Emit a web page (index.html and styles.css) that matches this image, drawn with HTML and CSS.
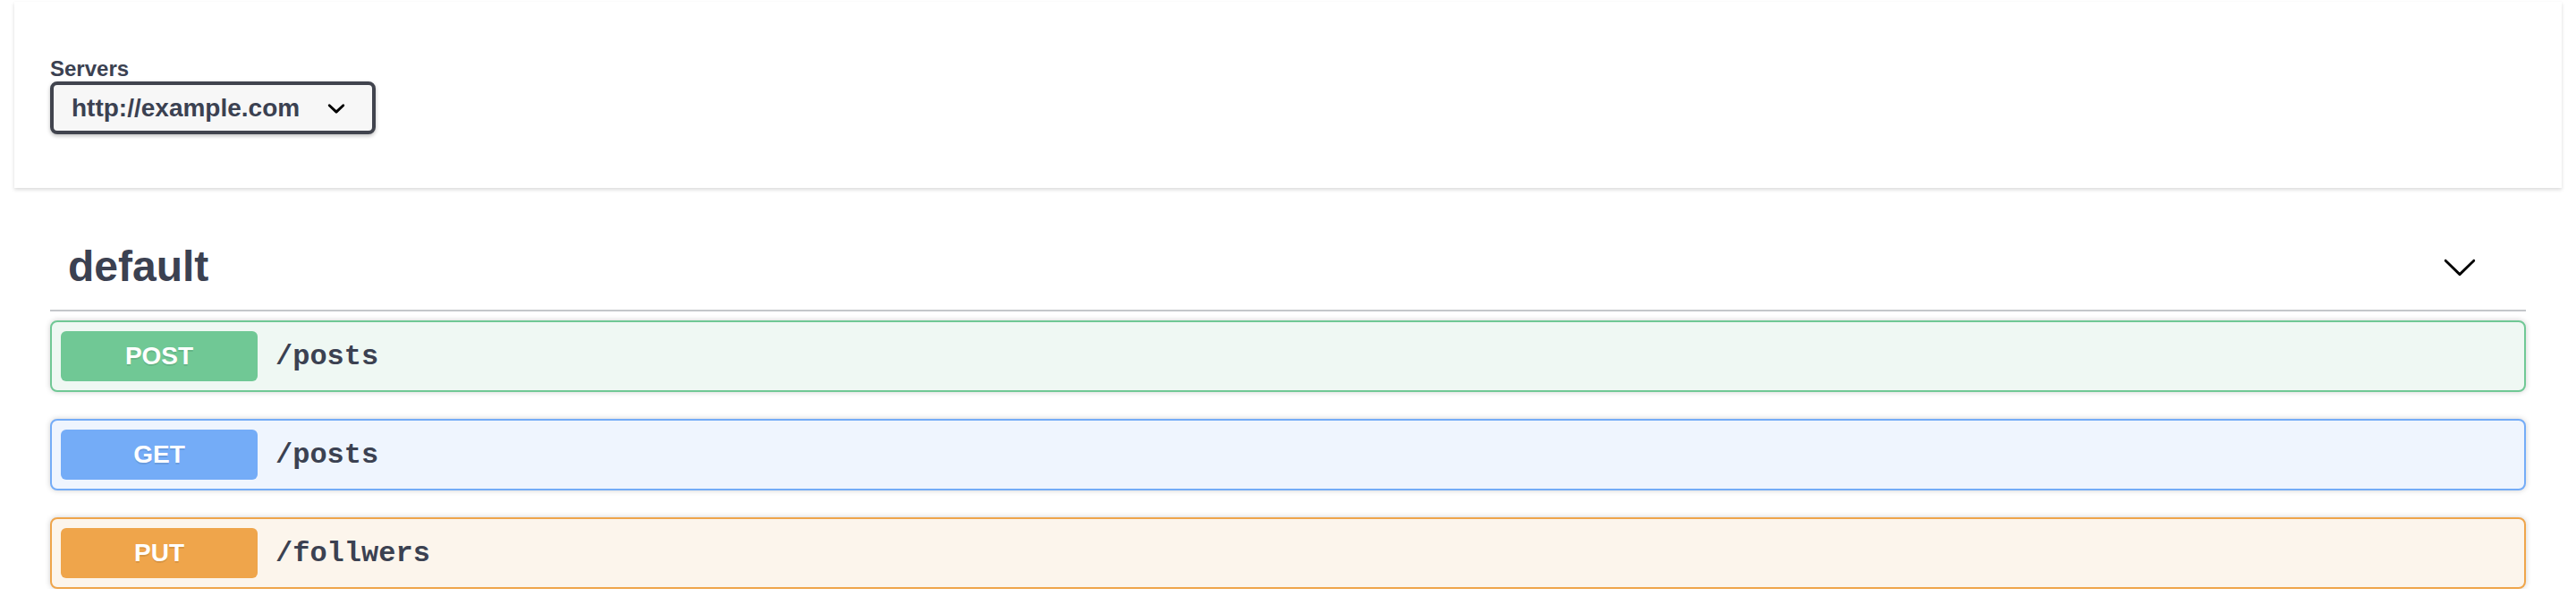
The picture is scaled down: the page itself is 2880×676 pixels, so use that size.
FILE: index.html
```html
<!DOCTYPE html>
<html lang="en">
<head>
<meta charset="utf-8">
<title>Swagger UI</title>
<link rel="stylesheet" href="styles.css">
</head>
<body>
<div class="page">
  <section class="scheme">
    <div class="wrapper">
      <div class="servers">
        <span class="servers-title">Servers</span>
        <div class="select">
          <span class="select-value">http://example.com</span>
          <svg class="select-arrow" viewBox="0 0 20 20" width="40" height="40"><path d="M13.418 7.859a.695.695 0 0 1 .978 0 .68.68 0 0 1 0 .969l-3.908 3.83a.697.697 0 0 1-.979 0l-3.908-3.83a.68.68 0 0 1 0-.969.695.695 0 0 1 .978 0L10 11l3.418-3.141z"/></svg>
        </div>
      </div>
    </div>
  </section>
  <div class="wrapper">
    <div class="tag">
      <h3 class="tag-title">default</h3>
      <button class="expand" type="button">
        <svg viewBox="0 0 20 20" width="40" height="40"><path d="M17.418 6.109c.272-.268.709-.268.979 0s.271.701 0 .969l-7.908 7.83c-.27.268-.707.268-.979 0l-7.908-7.83c-.27-.268-.27-.701 0-.969.271-.268.709-.268.979 0L10 13.25l7.418-7.141z"/></svg>
      </button>
    </div>
    <div class="ops">
      <div class="op op-post"><span class="method">POST</span><span class="path">/posts</span></div>
      <div class="op op-get"><span class="method">GET</span><span class="path">/posts</span></div>
      <div class="op op-put"><span class="method">PUT</span><span class="path">/follwers</span></div>
    </div>
  </div>
</div>
</body>
</html>
```

FILE: styles.css
```css
* { box-sizing: border-box; }
html, body { margin: 0; padding: 0; background: #fff; }
body { font-family: "Liberation Sans", Arial, sans-serif; color: #3b4151; }

.page { padding: 2px 16px 0; }

.scheme {
  background: #fff;
  box-shadow: 0 2px 4px 0 rgba(0, 0, 0, .15);
  padding: 60px 0;
  margin-bottom: 40px;
}

.wrapper { padding: 0 40px; }

.servers { display: flex; flex-direction: column; align-items: flex-start; }
.servers-title {
  font-size: 24px;
  font-weight: 700;
  line-height: 29px;
  color: #3b4151;
}

.select {
  display: flex;
  align-items: center;
  width: 364px;
  height: 59px;
  padding: 0 20px;
  border: 4px solid #41444e;
  border-radius: 8px;
  background: #f7f7f7;
  box-shadow: 0 2px 4px 0 rgba(0, 0, 0, .25);
  font-size: 28px;
  font-weight: 700;
  line-height: 31px;
  color: #3b4151;
}
.select-value { flex: 1; }
.select-arrow { display: block; flex: none; fill: #000; }

.tag {
  display: flex;
  align-items: center;
  padding: 20px 54px 20px 20px;
  border-bottom: 2px solid rgba(59, 65, 81, .3);
  margin-bottom: 10px;
}
.tag-title {
  flex: 1;
  margin: 0;
  font-size: 48px;
  font-weight: 700;
  line-height: 56px;
  color: #3b4151;
}
.expand {
  border: 0;
  background: none;
  padding: 0;
  margin: 0;
  display: block;
}
.expand svg { display: block; fill: #000; }

.ops { display: flex; flex-direction: column; gap: 30px; }

.op {
  display: flex;
  align-items: center;
  height: 80px;
  padding: 10px;
  border: 2px solid;
  border-radius: 8px;
  box-shadow: 0 0 6px rgba(0, 0, 0, .19);
}
.method {
  flex: none;
  width: 220px;
  height: 56px;
  line-height: 56px;
  border-radius: 6px;
  text-align: center;
  font-size: 28px;
  font-weight: 700;
  color: #fff;
  text-shadow: 0 2px 0 rgba(0, 0, 0, .1);
}
.path {
  padding: 0 20px;
  font-family: "Liberation Mono", "Courier New", monospace;
  font-size: 32px;
  font-weight: 700;
  color: #3b4151;
}

.op-post { border-color: #70c895; background: #eff8f3; }
.op-post .method { background: #70c895; }
.op-get { border-color: #74acf7; background: #eff5fe; }
.op-get .method { background: #74acf7; }
.op-put { border-color: #efa54b; background: #fcf5ec; }
.op-put .method { background: #efa54b; }
```
